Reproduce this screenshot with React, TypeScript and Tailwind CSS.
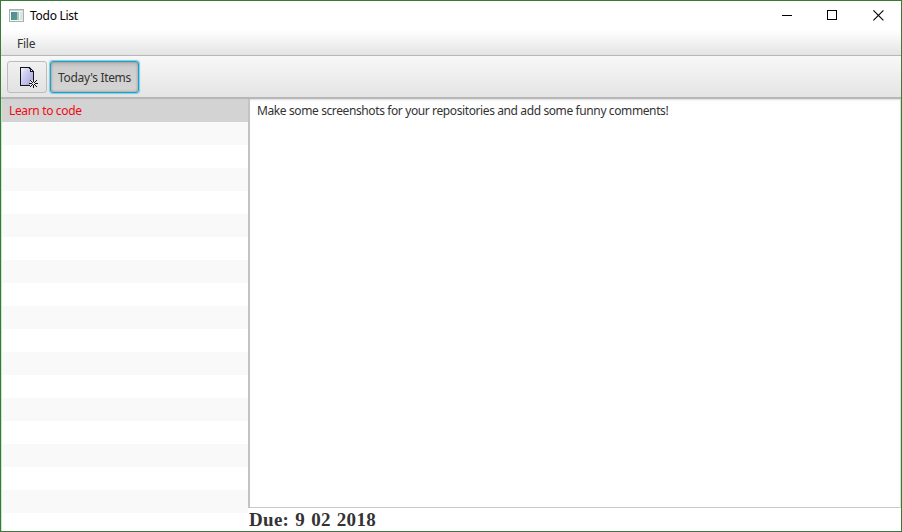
import React from "react";

const rows = Array.from({ length: 18 }, (_, i) => i);

function AppIcon() {
  return (
    <svg width="16" height="14" viewBox="0 0 16 14" shapeRendering="crispEdges">
      <defs>
        <linearGradient id="pane" x1="0" y1="0" x2="1" y2="1">
          <stop offset="0" stopColor="#5b80a8" />
          <stop offset="1" stopColor="#4da67c" />
        </linearGradient>
      </defs>
      <rect x="0.5" y="0.5" width="14" height="12" fill="#f4f6f6" stroke="#a9b0b2" />
      <rect x="1" y="1" width="13" height="1" fill="#c9d1d3" />
      <rect x="2" y="3" width="6" height="8" fill="url(#pane)" />
      <rect x="8" y="3" width="2" height="8" fill="#a9c4c0" />
      <rect x="11" y="3" width="3" height="8" fill="#dde2e2" />
    </svg>
  );
}

function NewItemIcon() {
  return (
    <svg width="20" height="22" viewBox="0 0 20 22" shapeRendering="crispEdges">
      <defs>
        <linearGradient id="paper" x1="0" y1="0" x2="1" y2="0.8">
          <stop offset="0" stopColor="#ffffff" />
          <stop offset="0.35" stopColor="#d4d4f2" />
          <stop offset="1" stopColor="#a6a6dc" />
        </linearGradient>
      </defs>
      <path d="M1 1h10l4 4v14H1z" fill="url(#paper)" />
      <path d="M10.5 19.5H1.5V1.5h9l4 4v7" fill="none" stroke="#141420" />
      <path d="M11 3l3 3h-3z" fill="#fff" />
      <path d="M10.5 1.5v1l1 1v2h3" fill="none" stroke="#141420" />
      <circle cx="14.5" cy="17.5" r="4" fill="#e9e9ed" />
      <path
        d="M14 13h1v3h-1zM14 19h1v3h-1zM10 17h3v1h-3zM16 17h3v1h-3zM11 14h1v1h-1zM12 15h1v1h-1zM13 16h1v1h-1zM17 14h1v1h-1zM16 15h1v1h-1zM15 16h1v1h-1zM11 20h1v1h-1zM12 19h1v1h-1zM13 18h1v1h-1zM17 20h1v1h-1zM16 19h1v1h-1zM15 18h1v1h-1z"
        fill="#111"
      />
    </svg>
  );
}

export default function App() {
  return (
    <div className="flex h-[532px] w-[902px] flex-col overflow-hidden border border-[#387b38] bg-white font-['Noto_Sans','Open_Sans',sans-serif] text-[12px] leading-[16px] text-[#333]">
      <header className="flex h-[29px] shrink-0 items-center pl-2">
        <AppIcon />
        <h1 className="ml-[5px] font-normal tracking-[-0.28px] text-black">Todo List</h1>
        <div className="ml-auto flex">
          <button aria-label="Minimize" className="flex h-7 w-[43px] items-center justify-center">
            <svg width="11" height="11" shapeRendering="crispEdges">
              <path d="M0 5.5h10" stroke="#000" />
            </svg>
          </button>
          <button aria-label="Maximize" className="flex h-7 w-[47px] items-center justify-center">
            <svg width="11" height="11" shapeRendering="crispEdges">
              <rect x="0.5" y="0.5" width="9" height="9" fill="none" stroke="#000" />
            </svg>
          </button>
          <button aria-label="Close" className="flex h-7 w-[45px] items-center justify-center">
            <svg width="11" height="11">
              <path d="M.4.4l10 10M10.4.4l-10 10" stroke="#000" strokeWidth="1.1" />
            </svg>
          </button>
        </div>
      </header>
      <nav className="flex h-[26px] shrink-0 items-center border-b border-[#b7b7b7] bg-linear-to-b from-white to-[#e4e4e4] pl-4 pt-[2px]">
        <span className="tracking-[-0.25px]">File</span>
      </nav>
      <div className="flex h-[43px] shrink-0 items-start gap-[3px] border-b-2 border-[#b7b7b7] bg-linear-to-b from-[#f8f8f8] to-[#e4e4e4] pl-[6px] pt-[5px]">
        <button aria-label="New item" className="flex h-8 w-10 items-center justify-center rounded-[3px] border border-[#bcbcbc] bg-linear-to-b from-[#f1f1f1] to-[#e2e2e2] pl-1">
          <NewItemIcon />
        </button>
        <button className="flex h-8 w-[89px] items-center justify-center rounded-[3px] border border-[#1d9fc6] bg-linear-to-b from-[#bdbdbd] via-[#cecece] via-20% to-[#d4d4d4] shadow-[0_0_1px_1px_#7fcbe2,inset_0_0_3px_#888]">
          <span className="whitespace-nowrap pt-px tracking-[-0.33px]">Today's Items</span>
        </button>
      </div>
      <main className="flex min-h-0 flex-1">
        <ul className="w-[247px] shrink-0 overflow-hidden border-l border-[#c8e6c8]">
          <li className="flex h-[23px] items-center bg-[#d3d3d3] pl-[7px] text-[#f00a12]">
            <span className="tracking-[-0.35px]">Learn to code</span>
          </li>
          {rows.map((i) => (
            <li key={i} className="h-[23px] odd:bg-white even:bg-[#f9f9f9]" />
          ))}
        </ul>
        <section className="flex min-w-0 flex-1 flex-col">
          <div className="h-[409px] shrink-0 border-b border-l-2 border-r border-b-[#c8c8c8] border-l-[#c3c3c3] border-r-[#c8e6c8] pl-[7px] pt-1 shadow-[inset_0_2px_2px_-1px_#ddd]">
            <p className="whitespace-nowrap tracking-[-0.39px]">
              Make some screenshots for your repositories and add some funny comments!
            </p>
          </div>
          <p className="pl-px pt-px font-['Liberation_Serif',serif] text-[19px] font-bold leading-[22px] tracking-[0.3px] [word-spacing:1px]">
            Due: 9 02 2018
          </p>
        </section>
      </main>
    </div>
  );
}
